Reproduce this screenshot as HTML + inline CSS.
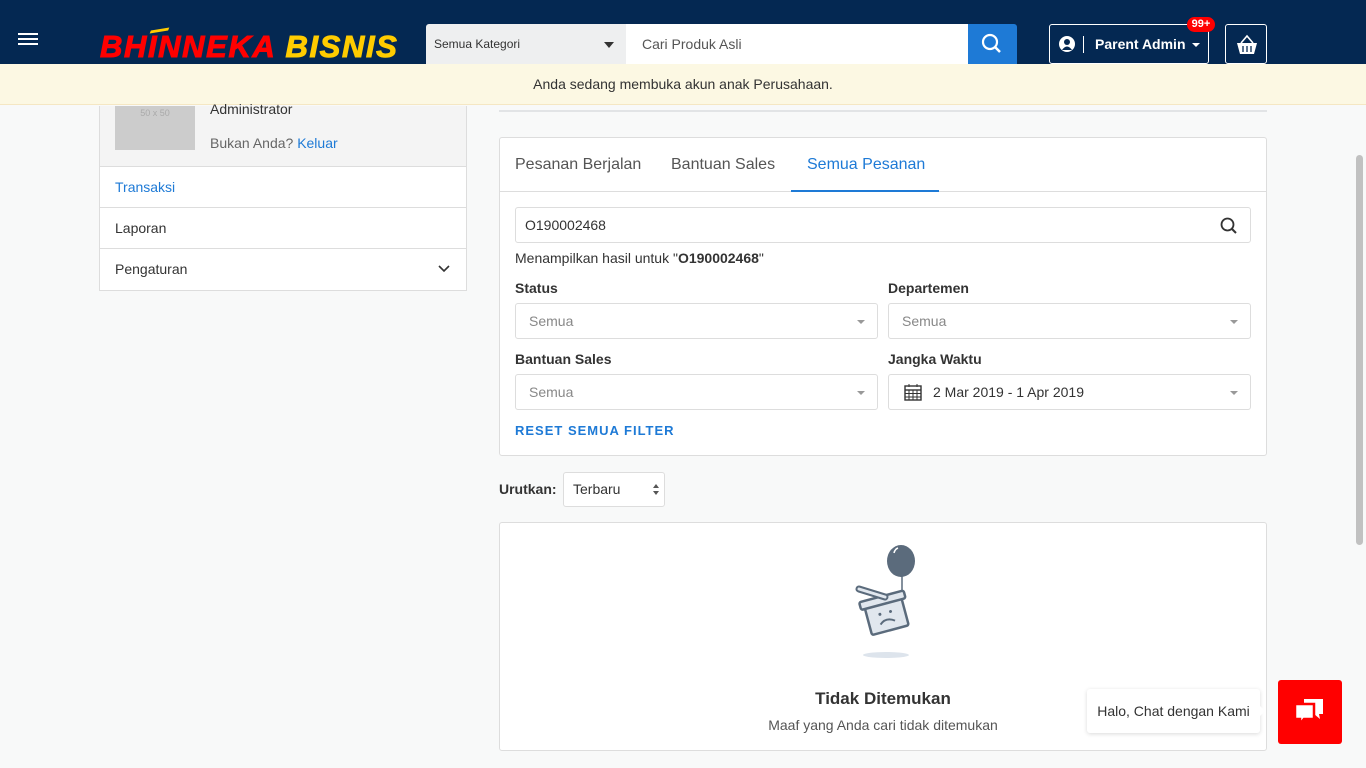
<!DOCTYPE html>
<html><head><meta charset="utf-8"><style>
*{box-sizing:border-box;margin:0;padding:0}
body{width:1366px;height:768px;overflow:hidden;background:#f8f9f9;font-family:"Liberation Sans",sans-serif;color:#333;font-size:14px;position:relative}
.abs{position:absolute}
.hdr{left:0;top:0;width:1366px;height:64px;background:#042852}
.banner{left:0;top:64px;width:1366px;height:41px;background:#fcf8e3;border-bottom:1px solid #f5e7c3;text-align:center;line-height:41px;font-size:14px;color:#333}
.box{background:#fff;border:1px solid #ddd;border-radius:3px}
.sel{background:#fff;border:1px solid #ddd;border-radius:3px;height:36px;color:#888;padding-left:13px;line-height:34px;font-size:14px}
.caret{position:absolute;right:12px;top:16px;width:0;height:0;border-left:4px solid transparent;border-right:4px solid transparent;border-top:4px solid #999}
.lbl{font-weight:bold;font-size:14px;color:#333}
</style></head><body>
<div class="abs hdr"></div>
<div class="abs" style="left:18px;top:38px;width:20px;height:2px;background:#fff;box-shadow:0 -5px 0 #fff,0 5px 0 #fff"></div>
<div class="abs" style="left:100px;top:29px;font:italic bold 31px 'Liberation Sans',sans-serif;letter-spacing:1.6px;white-space:nowrap;-webkit-text-stroke:1px currentColor"><span style="color:#f00">BHINNEKA</span> <span style="color:#ffcc00">BISNIS</span></div>
<div class="abs" style="left:151px;top:29px;width:17px;height:3px;background:#ffcc00;transform:skewX(-30deg) rotate(-10deg)"></div>
<div class="abs" style="left:426px;top:24px;width:200px;height:40px;background:#eeeff0;border-radius:3px 0 0 0;font-size:12px;color:#333;line-height:40px;padding-left:8px">Semua Kategori<span style="position:absolute;right:12px;top:18px;border-left:5px solid transparent;border-right:5px solid transparent;border-top:6px solid #333"></span></div>
<div class="abs" style="left:626px;top:24px;width:342px;height:40px;background:#fff;color:#555;line-height:40px;padding-left:16px;font-size:14px">Cari Produk Asli</div>
<div class="abs" style="left:968px;top:24px;width:49px;height:40px;background:#1e7ad6;border-radius:0 3px 0 0"><svg width="49" height="40"><circle cx="22" cy="18" r="7" fill="none" stroke="#fff" stroke-width="2.2"/><line x1="27" y1="23" x2="32" y2="28" stroke="#fff" stroke-width="2.5"/></svg></div>
<div class="abs" style="left:1049px;top:24px;width:160px;height:40px;border:1px solid #fff;border-radius:3px;color:#fff;font-weight:bold;font-size:14px;line-height:38px">
<svg class="abs" style="left:9px;top:11px" width="16" height="16"><circle cx="8" cy="8" r="8" fill="#fff"/><circle cx="8" cy="6" r="3" fill="#042852"/><path d="M3 14 Q8 7 13 14" fill="#042852"/></svg>
<span class="abs" style="left:33px;top:11px;width:1px;height:17px;background:#fff"></span>
<span class="abs" style="left:45px;top:0">Parent Admin</span>
<span class="abs" style="left:142px;top:18px;border-left:4px solid transparent;border-right:4px solid transparent;border-top:4px solid #fff"></span></div>
<div class="abs" style="left:1187px;top:17px;width:28px;height:15px;background:#f00;border-radius:8px;color:#fff;font-size:11px;font-weight:bold;text-align:center;line-height:15px">99+</div>
<div class="abs" style="left:1225px;top:24px;width:42px;height:40px;border:1px solid #fff;border-radius:3px"><svg width="42" height="40"><path d="M11 18 H31 L28 29 H14 Z" fill="#fff"/><path d="M15 18 L21 11 L27 18" fill="none" stroke="#fff" stroke-width="1.6"/><path d="M17 21v6M21 21v6M25 21v6" stroke="#042852" stroke-width="1.3"/></svg></div>
<div class="abs banner">Anda sedang membuka akun anak Perusahaan.</div>

<div class="abs" style="left:99px;top:106px;width:368px;height:185px;border:1px solid #ddd;border-top:none;background:#fff">
<div style="height:61px;background:#f4f4f4;border-bottom:1px solid #ddd;position:relative">
<div class="abs" style="left:15px;top:0;width:80px;height:44px;background:#ccc;color:#aaa;font-size:9px;text-align:center;line-height:14px">50 x 50</div>
<div class="abs" style="left:110px;top:-5px;color:#333">Administrator</div>
<div class="abs" style="left:110px;top:29px;color:#666">Bukan Anda? <span style="color:#1e7ad6">Keluar</span></div></div>
<div style="height:41px;border-bottom:1px solid #ddd;line-height:40px;padding-left:15px;color:#1e7ad6">Transaksi</div>
<div style="height:41px;border-bottom:1px solid #ddd;line-height:40px;padding-left:15px">Laporan</div>
<div style="height:41px;line-height:40px;padding-left:15px;position:relative">Pengaturan<svg class="abs" style="right:16px;top:16px" width="12" height="8"><path d="M1 1 L6 6 L11 1" fill="none" stroke="#333" stroke-width="1.6"/></svg></div>
</div>

<div class="abs" style="left:499px;top:110px;width:768px;height:2px;background:#e2e4e6"></div>
<div class="abs box" style="left:499px;top:137px;width:768px;height:319px">
<div style="height:54px;border-bottom:1px solid #ddd;position:relative;font-size:16px;color:#555">
<span class="abs" style="left:15px;top:18px">Pesanan Berjalan</span>
<span class="abs" style="left:171px;top:18px">Bantuan Sales</span>
<span class="abs" style="left:307px;top:18px;color:#1e7ad6">Semua Pesanan</span>
<span class="abs" style="left:291px;top:52px;width:148px;height:2px;background:#1e7ad6"></span></div>
<div class="abs" style="left:15px;top:69px;width:736px;height:36px;border:1px solid #ddd;border-radius:3px;line-height:34px;padding-left:9px;color:#333">O190002468
<svg class="abs" style="right:12px;top:9px" width="18" height="18"><circle cx="7.5" cy="7.5" r="6" fill="none" stroke="#333" stroke-width="1.8"/><line x1="12" y1="12" x2="16" y2="16" stroke="#333" stroke-width="2"/></svg></div>
<div class="abs" style="left:15px;top:112px;color:#333">Menampilkan hasil untuk "<b>O190002468</b>"</div>
<div class="abs lbl" style="left:15px;top:142px">Status</div>
<div class="abs lbl" style="left:388px;top:142px">Departemen</div>
<div class="abs sel" style="left:15px;top:165px;width:363px">Semua<span class="caret"></span></div>
<div class="abs sel" style="left:388px;top:165px;width:363px">Semua<span class="caret"></span></div>
<div class="abs lbl" style="left:15px;top:213px">Bantuan Sales</div>
<div class="abs lbl" style="left:388px;top:213px">Jangka Waktu</div>
<div class="abs sel" style="left:15px;top:236px;width:363px">Semua<span class="caret"></span></div>
<div class="abs sel" style="left:388px;top:236px;width:363px;color:#333;padding-left:44px">2 Mar 2019 - 1 Apr 2019<span class="caret"></span>
<svg class="abs" style="left:15px;top:9px" width="18" height="17"><rect x="1" y="2" width="16" height="14" fill="none" stroke="#333" stroke-width="1.4"/><line x1="1" y1="6" x2="17" y2="6" stroke="#333" stroke-width="1.4"/><path d="M5 0v3M13 0v3M1 9.5h16M1 13h16M5 6v10M9 6v10M13 6v10" stroke="#333" stroke-width="1"/></svg></div>
<div class="abs" style="left:15px;top:285px;color:#1e7ad6;font-weight:bold;font-size:13px;letter-spacing:1px">RESET SEMUA FILTER</div>
</div>

<div class="abs lbl" style="left:499px;top:481px">Urutkan:</div>
<div class="abs" style="left:563px;top:472px;width:102px;height:35px;background:#fff;border:1px solid #ddd;border-radius:3px;line-height:33px;padding-left:9px;color:#333">Terbaru
<span class="abs" style="right:5px;top:11px;border-left:3px solid transparent;border-right:3px solid transparent;border-bottom:4px solid #555"></span>
<span class="abs" style="right:5px;top:18px;border-left:3px solid transparent;border-right:3px solid transparent;border-top:4px solid #555"></span></div>

<div class="abs box" style="left:499px;top:522px;width:768px;height:229px">
<svg class="abs" style="left:345px;top:16px" width="80" height="125">
<line x1="57" y1="35" x2="57" y2="66" stroke="#5b6b7c" stroke-width="1.5"/>
<ellipse cx="56" cy="22" rx="14" ry="16" fill="#5b6b7c"/>
<path d="M49 14 Q50 10 53 9" stroke="#fff" stroke-width="1.5" fill="none"/>
<g transform="rotate(-15 40 75)"><rect x="22" y="62" width="38" height="30" fill="#e1e7ee" stroke="#5b6b7c" stroke-width="2.5" rx="2"/>
<rect x="18" y="57" width="46" height="8" fill="#e1e7ee" stroke="#5b6b7c" stroke-width="2.5" rx="2"/>
<circle cx="35" cy="74" r="1.5" fill="#5b6b7c"/><circle cx="46" cy="74" r="1.5" fill="#5b6b7c"/>
<path d="M33 84 Q40 78 48 84" fill="none" stroke="#5b6b7c" stroke-width="2"/></g>
<path d="M14 50 L40 58" stroke="#5b6b7c" stroke-width="7" stroke-linecap="round"/><path d="M14 50 L40 58" stroke="#e1e7ee" stroke-width="3" stroke-linecap="round"/>
<ellipse cx="41" cy="116" rx="23" ry="3" fill="#dde4ec"/></svg>
<div class="abs" style="left:0;top:166px;width:766px;text-align:center;font-size:17px;font-weight:bold;color:#333">Tidak Ditemukan</div>
<div class="abs" style="left:0;top:194px;width:766px;text-align:center;font-size:14px;color:#555">Maaf yang Anda cari tidak ditemukan</div>
</div>

<div class="abs" style="left:1087px;top:689px;width:173px;height:44px;background:#fff;border-radius:3px;box-shadow:0 1px 4px rgba(0,0,0,.15);line-height:44px;text-align:center;font-size:14px;color:#333">Halo, Chat dengan Kami</div>
<div class="abs" style="left:1259px;top:705px;border-top:6px solid transparent;border-bottom:6px solid transparent;border-left:6px solid #fff"></div>
<div class="abs" style="left:1278px;top:680px;width:64px;height:64px;background:#f00;border-radius:3px">
<svg width="64" height="64"><path d="M26 19 H45 V34 H41 L42 39 L36 34 H26 Z" fill="#fff"/><path d="M17 24 H36 V39 H26 L22 44 L22 39 H17 Z" fill="#fff" stroke="#f00" stroke-width="2.5"/></svg></div>
<div class="abs" style="left:1356px;top:155px;width:7px;height:390px;background:#c1c1c1;border-radius:4px"></div>
</body></html>
